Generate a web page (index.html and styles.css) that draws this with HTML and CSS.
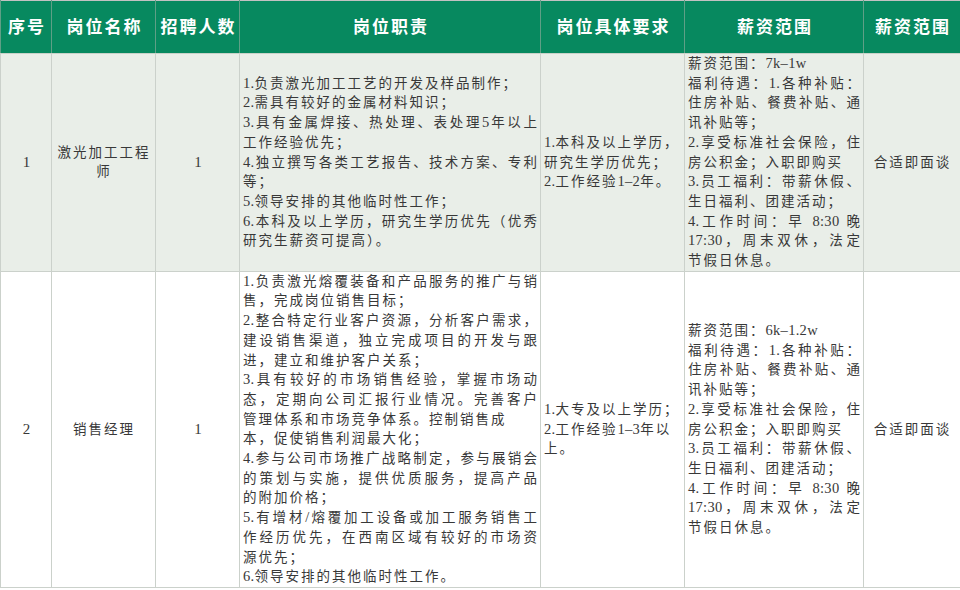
FILE: index.html
```html
<!DOCTYPE html>
<html lang="zh-CN">
<head>
<meta charset="utf-8">
<title>招聘岗位</title>
<link rel="stylesheet" href="styles.css">
</head>
<body>
<table class="jobs">
  <colgroup>
    <col class="c1"><col class="c2"><col class="c3"><col class="c4"><col class="c5"><col class="c6"><col class="c7">
  </colgroup>
  <thead>
    <tr class="head">
      <th>序号</th>
      <th>岗位名称</th>
      <th>招聘人数</th>
      <th>岗位职责</th>
      <th>岗位具体要求</th>
      <th>薪资范围</th>
      <th>薪资范围</th>
    </tr>
  </thead>
  <tbody>
    <tr class="row alt">
      <td class="ctr num">1</td>
      <td class="ctr">激光加工工程<br>师</td>
      <td class="ctr num">1</td>
      <td class="txt">
        <div><span class="n">1.</span>负责激光加工工艺的开发及样品制作；</div>
        <div><span class="n">2.</span>需具有较好的金属材料知识；</div>
        <div class="j"><span class="n">3.</span>具有金属焊接、热处理、表处理<span class="n">5</span>年以上</div>
        <div>工作经验优先；</div>
        <div class="j"><span class="n">4.</span>独立撰写各类工艺报告、技术方案、专利</div>
        <div>等；</div>
        <div><span class="n">5.</span>领导安排的其他临时性工作；</div>
        <div class="j"><span class="n">6.</span>本科及以上学历，研究生学历优先（优秀</div>
        <div>研究生薪资可提高）。</div>
      </td>
      <td class="txt">
        <div><span class="n">1.</span>本科及以上学历，</div>
        <div>研究生学历优先；</div>
        <div><span class="n">2.</span>工作经验<span class="n">1–2</span>年。</div>
      </td>
      <td class="txt">
        <div>薪资范围：<span class="n">7k–1w</span></div>
        <div class="j">福利待遇：<span class="n">1.</span>各种补贴：</div>
        <div class="j">住房补贴、餐费补贴、通</div>
        <div>讯补贴等；</div>
        <div class="j"><span class="n">2.</span>享受标准社会保险，住</div>
        <div>房公积金；入职即购买</div>
        <div class="j"><span class="n">3.</span>员工福利：带薪休假、</div>
        <div>生日福利、团建活动；</div>
        <div class="j"><span class="n">4.</span>工作时间：早 <span class="n">8:30</span> 晚</div>
        <div class="j"><span class="n">17:30</span>，周末双休，法定</div>
        <div>节假日休息。</div>
      </td>
      <td class="ctr">合适即面谈</td>
    </tr>
    <tr class="row">
      <td class="ctr num">2</td>
      <td class="ctr">销售经理</td>
      <td class="ctr num">1</td>
      <td class="txt">
        <div class="j"><span class="n">1.</span>负责激光熔覆装备和产品服务的推广与销</div>
        <div>售，完成岗位销售目标；</div>
        <div class="j"><span class="n">2.</span>整合特定行业客户资源，分析客户需求，</div>
        <div class="j">建设销售渠道，独立完成项目的开发与跟</div>
        <div>进，建立和维护客户关系；</div>
        <div class="j"><span class="n">3.</span>具有较好的市场销售经验，掌握市场动</div>
        <div class="j">态，定期向公司汇报行业情况。完善客户</div>
        <div>管理体系和市场竞争体系。控制销售成</div>
        <div>本，促使销售利润最大化；</div>
        <div class="j"><span class="n">4.</span>参与公司市场推广战略制定，参与展销会</div>
        <div class="j">的策划与实施，提供优质服务，提高产品</div>
        <div>的附加价格；</div>
        <div class="j"><span class="n">5.</span>有增材<span class="n">/</span>熔覆加工设备或加工服务销售工</div>
        <div class="j">作经历优先，在西南区域有较好的市场资</div>
        <div>源优先；</div>
        <div><span class="n">6.</span>领导安排的其他临时性工作。</div>
      </td>
      <td class="txt">
        <div><span class="n">1.</span>大专及以上学历；</div>
        <div><span class="n">2.</span>工作经验<span class="n">1–3</span>年以</div>
        <div>上。</div>
      </td>
      <td class="txt">
        <div>薪资范围：<span class="n">6k–1.2w</span></div>
        <div class="j">福利待遇：<span class="n">1.</span>各种补贴：</div>
        <div class="j">住房补贴、餐费补贴、通</div>
        <div>讯补贴等；</div>
        <div class="j"><span class="n">2.</span>享受标准社会保险，住</div>
        <div>房公积金；入职即购买</div>
        <div class="j"><span class="n">3.</span>员工福利：带薪休假、</div>
        <div>生日福利、团建活动；</div>
        <div class="j"><span class="n">4.</span>工作时间：早 <span class="n">8:30</span> 晚</div>
        <div class="j"><span class="n">17:30</span>，周末双休，法定</div>
        <div>节假日休息。</div>
      </td>
      <td class="ctr">合适即面谈</td>
    </tr>
  </tbody>
</table>
</body>
</html>
```

FILE: styles.css
```css
html, body {
  margin: 0;
  padding: 0;
  background: #ffffff;
}

.jobs {
  width: 960px;
  table-layout: fixed;
  border-collapse: collapse;
  border: 1px solid #c2c2c2;
  font-family: "Liberation Serif", "Noto Sans CJK SC", serif;
  color: #383838;
  font-size: 13.5px;
  line-height: 19.7px;
  letter-spacing: 2px;
}

.c1 { width: 51px; }
.c2 { width: 104px; }
.c3 { width: 84px; }
.c4 { width: 301px; }
.c5 { width: 144px; }
.c6 { width: 179px; }
.c7 { width: 97px; }

.head {
  height: 53px;
  background: #07895f;
}

.head th {
  color: #ffffff;
  font-family: "Noto Sans CJK SC", sans-serif;
  font-weight: 700;
  font-size: 17px;
  letter-spacing: 2px;
  text-align: center;
  vertical-align: middle;
  padding: 0 0 2px 2px;
  border-left: 1px solid #5f9f86;
  border-right: 1px solid #5f9f86;
  border-bottom: 1px solid #c9d2c9;
}

.row td {
  border: 1px solid #cbd1cb;
  vertical-align: middle;
  padding: 0 2px 0 3px;
}

.row.alt {
  background: #e9eee8;
}

.ctr {
  text-align: center;
}

.num {
  font-size: 15px;
  letter-spacing: 0;
}

.n {
  font-size: 14.5px;
  letter-spacing: 0.3px;
}

.txt div {
  white-space: nowrap;
  text-align: left;
}

.txt div.j {
  letter-spacing: 1px;
  text-align: justify;
  text-align-last: justify;
}

.txt div.j .n {
  letter-spacing: 0.3px;
}
```
